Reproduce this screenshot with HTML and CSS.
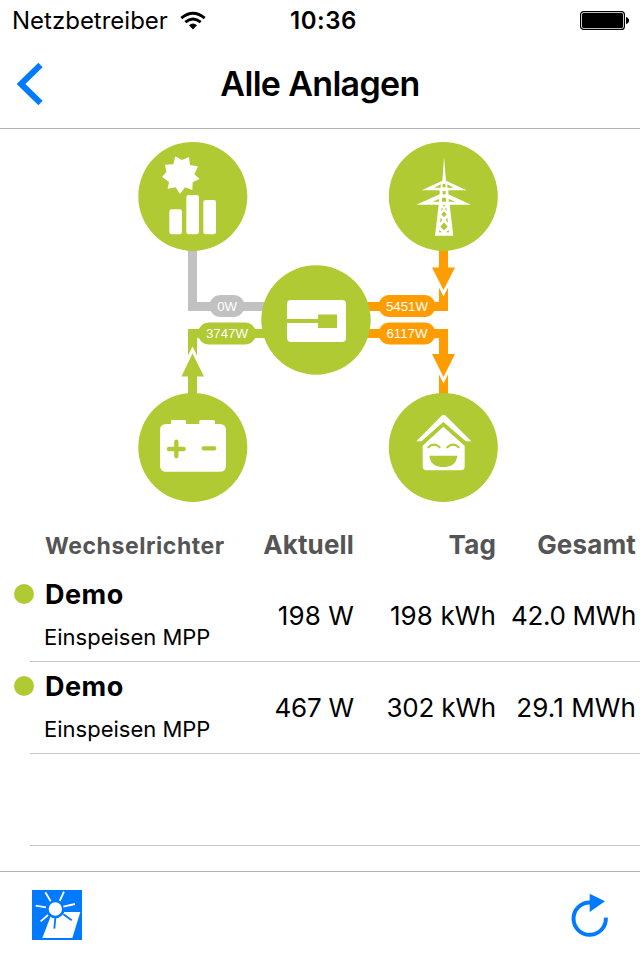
FILE: index.html
```html
<!DOCTYPE html>
<html lang="de">
<head>
<meta charset="utf-8">
<title>Alle Anlagen</title>
<link rel="stylesheet" href="styles.css">
</head>
<body>
<div class="app">
  <div class="status">
    <div class="carrier"><span>Netzbetreiber</span>
      <svg class="wifi" width="26" height="20" viewBox="0 0 26 20" fill="none" stroke="#000" stroke-width="2.9">
        <path d="M1.3 7.1Q13 -2.8 24.7 7.1"/>
        <path d="M5.3 11.2Q13 4.7 20.7 11.2"/>
        <path d="M9 14.2Q13 10.8 17 14.2L13 18.5Z" fill="#000" stroke="none"/>
      </svg>
    </div>
    <span class="time">10:36</span>
    <svg class="battery" width="50" height="20" viewBox="0 0 50 20">
      <rect x=".6" y=".6" width="43.8" height="17.8" rx="3" fill="none" stroke="#000" stroke-width="1.2"/>
      <rect x="2" y="2" width="41" height="15" rx="1.5"/>
      <path d="M46 6Q49 7 49 9.5T46 13Z"/>
    </svg>
  </div>
  <header class="nav">
    <svg class="back" width="30" height="44" viewBox="0 0 30 44" fill="none" stroke="#007aff" stroke-width="6"><path d="M25.500 3L6 22L25.500 41"/></svg>
    <h1>Alle Anlagen</h1>
  </header>

  <svg class="flow" width="640" height="391" viewBox="0 129 640 391">
    <g fill="none" stroke-width="9">
      <path stroke="#c1c1c1" d="M192.5 240V306.5H270"/>
      <path stroke="#b0ca33" d="M192.5 400V333.5H270"/>
      <path stroke="#ff9c00" d="M443.500 240V306.500H360M443.500 400V333.500H360"/>
    </g>
    <path class="gap" d="M435.500 275L443.500 291L451.500 275M435.500 362L443.500 378L451.500 362M184.500 368L192.500 352L200.500 368"/>
    <path class="arrow orange" d="M432 267.500H455L443.500 290Z"/>
    <path class="arrow orange" d="M432 354H455L443.500 377Z"/>
    <path class="arrow green" d="M181.500 376.500H204L192.500 353.500Z"/>
    <rect class="gray" x="209.500" y="295" width="35" height="22" rx="11"/>
    <rect class="green" x="198" y="322.500" width="58" height="22" rx="11"/>
    <rect class="orange" x="378.500" y="295" width="57" height="22" rx="11"/>
    <rect class="orange" x="378.500" y="322.500" width="57" height="22" rx="11"/>
    <g class="watts">
      <text x="227.200" y="311">0W</text>
      <text x="227" y="338">3747W</text>
      <text x="407" y="311">5451W</text>
      <text x="407" y="338">6117W</text>
    </g>
    <g class="green">
      <circle cx="192.800" cy="196.400" r="54.500"/><circle cx="443.300" cy="196.400" r="54.500"/>
      <circle cx="316" cy="320" r="54.700"/>
      <circle cx="192.800" cy="447.400" r="54.500"/><circle cx="443.300" cy="447.400" r="54.500"/>
    </g>
    <g transform="translate(130 135) scale(.33333)" fill="#fff">
      <path d="M136 64L156 75L177 66L180 90L204 94L193 118L209 132L188 142L187 165L165 157L150 177L137 157L113 161L117 141L96 126L109 111L105 89L130 88Z"/>
      <rect x="118" y="223" width="38" height="75" rx="7"/><rect x="169" y="180" width="38" height="118" rx="7"/><rect x="220" y="195" width="38" height="103" rx="7"/>
    </g>
    <g transform="translate(380 135) scale(.33333)">
      <path fill="#fff" d="M192 66L198 137L260 166H205V178L273 209H209L220 302H165L176 209H109L179 178V166H125L187 137Z"/>
      <g class="green"><path d="M182 148V158H163ZM202 148V158H221ZM177 192V200H157ZM206 192V200H226ZM188 147H196L197 157H187ZM188 168H197V176L192 180L188 176ZM186 188H198V200H186ZM187 211H197L192 216ZM185 217L189 222L184 228ZM199 217L195 222L200 228ZM192 229L200 238L192 247L184 238ZM182 248L187 254L180 264ZM202 248L197 254L204 264ZM192 262L203 275L192 286L181 275ZM178 285L186 292H177ZM206 285L198 292H207Z"/></g>
    </g>
    <g>
      <rect x="287" y="300" width="59" height="42" rx="4" fill="#fff"/>
      <path class="green" d="M286 319H318V314.500H337V328H318V323H286Z"/>
    </g>
    <g transform="translate(130 385) scale(.33333)">
      <path fill="#fff" d="M109 117H123V109Q123 105 127 105H164Q168 105 168 109V117H208V109Q208 105 212 105H250Q255 105 255 109V117H269Q288 117 288 136V242Q288 260 269 260H109Q90 260 90 242V136Q90 117 109 117Z"/>
      <path class="sign" d="M139 170V214M117 192H161M221 190H253"/>
    </g>
    <g transform="translate(380 385) scale(.33333)">
      <path fill="#fff" d="M109 169L184 93Q191 86 198 93L274 169H253L190 112L127 169ZM128 182L190 124L254 182V244Q254 256 242 256H140Q128 256 128 244Z"/>
      <path class="green" d="M190 111L122 171L128 181L190 125L253 181L260 171ZM148 212H232Q228 246 190 246T148 212Z"/>
      <path class="eyes" d="M145 187Q162 171 179 187M202 187Q219 171 236 187"/>
    </g>
  </svg>

  <div class="row head">
    <span class="small">Wechselrichter</span><span class="val">Aktuell</span><span class="val">Tag</span><span class="val">Gesamt</span>
  </div>
  <div class="row">
    <i class="dot"></i>
    <div class="name"><b>Demo</b><span>Einspeisen MPP</span></div>
    <span class="val wide">198 W</span><span class="val wide">198 kWh</span><span class="val total">42.0 MWh</span>
  </div>
  <div class="row">
    <i class="dot"></i>
    <div class="name"><b>Demo</b><span>Einspeisen MPP</span></div>
    <span class="val">467 W</span><span class="val">302 kWh</span><span class="val wide">29.1 MWh</span>
  </div>
  <div class="row"></div>
  <footer class="toolbar">
    <svg width="50" height="50" viewBox="96 150 150 150">
      <path fill="#007aff" d="M96 150H246V300H96Z"/>
      <path fill="#fff" d="M157 216H241L217 294H127Z"/>
      <circle cx="166" cy="207" r="24" fill="#fff" stroke="#007aff" stroke-width="8"/>
      <g fill="none" stroke-width="5.5"><path stroke="#fff" d="M152 184L136 157M179 183L192 155M138 202L107 197M190 200L225 192M144 225L122 244"/><path stroke="#007aff" d="M190 223L215 241M166 233L163 266"/></g>
    </svg>
    <svg width="38" height="46" viewBox="94 160 114 138">
      <path fill="none" stroke="#007aff" stroke-width="12" d="M151 188.500A48.500 48.500 0 1 0 198.500 234"/>
      <path fill="#007aff" d="M150 162L196 185L150 217Z"/>
    </svg>
  </footer>
</div>
</body>
</html>
```
FILE: styles.css
```css
* { box-sizing: border-box; }
body { margin: 0; background: #fff; color: #000; font-family: Inter, sans-serif; }
.app { width: 640px; height: 960px; overflow: hidden; display: flex; flex-direction: column; }
.status { height: 40px; flex: none; display: grid; grid-template-columns: 1fr auto 1fr; align-items: center; padding: 1px 10px 0 12px; font-size: 24px; line-height: 39px; }
.carrier { display: flex; align-items: center; gap: 12px; }
.time { font-weight: 600; letter-spacing: .5px; padding-left: 5px; }
.battery { justify-self: end; }
.nav { height: 89px; flex: none; border-bottom: 1px solid #b2b2b2; display: grid; grid-template-columns: 60px 1fr 60px; align-items: center; }
.back { margin-left: 15px; }
h1 { margin: 0; font-size: 34px; font-weight: 600; line-height: 40px; letter-spacing: -.67px; text-align: center; white-space: nowrap; }
.flow { flex: none; display: block; }
.green { fill: #b0ca33; }
.orange { fill: #ff9c00; }
.gray { fill: #c1c1c1; }
.gap { fill: none; stroke: #fff; stroke-width: 5; stroke-linejoin: miter; }
.watts { font: 13.3px "Liberation Sans", sans-serif; fill: #fff; text-anchor: middle; }
.sign { fill: none; stroke: #b0ca33; stroke-width: 13; stroke-linecap: round; }
.eyes { fill: none; stroke: #b0ca33; stroke-width: 6; stroke-linecap: round; }
.row { height: 92px; flex: none; margin-left: 30px; border-bottom: 1px solid #c8c7cc; display: grid; grid-template-columns: 14px 180px 130px 142px 140px; align-items: center; font-size: 26px; white-space: nowrap; position: relative; }
.head { height: 50px; border: 0; font-weight: 700; color: #555; padding-bottom: 1px; }
.small { grid-column: 2; font-size: 23px; letter-spacing: .55px; padding: 2px 0 0 1px; }
.val { justify-self: end; letter-spacing: -.2px; }
.wide { letter-spacing: .1px; }
.total { letter-spacing: -.35px; }
.head .val { letter-spacing: .15px; }
.name { grid-column: 2; display: flex; flex-direction: column; justify-content: center; gap: 2px; padding-top: 1px; }
.name b { font-size: 27px; font-weight: 700; line-height: 40px; letter-spacing: .5px; padding-left: 1px; }
.name span { font-size: 22px; line-height: 40px; }
.dot { position: absolute; left: -16px; top: 14px; width: 20px; height: 20px; border-radius: 50%; background: #b0ca33; }
.toolbar { flex: 1; margin-top: 25px; border-top: 1px solid #b2b2b2; display: flex; justify-content: space-between; align-items: flex-start; padding: 18px 31px 0 32px; }
.toolbar svg:last-child { margin-top: 3px; }
```
